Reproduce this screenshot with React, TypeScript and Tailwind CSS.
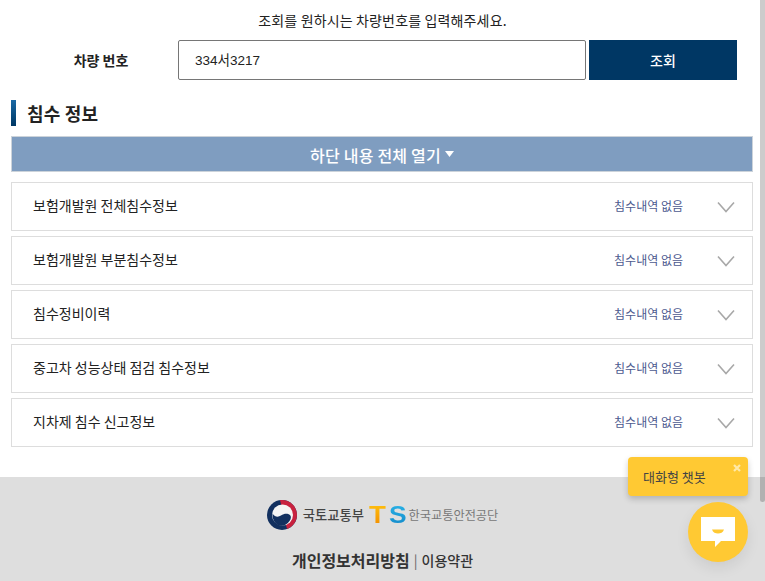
const font = "font-['Noto_Sans_CJK_KR','Noto_Sans',sans-serif]";

const rows = [
  "보험개발원 전체침수정보",
  "보험개발원 부분침수정보",
  "침수정비이력",
  "중고차 성능상태 점검 침수정보",
  "지차제 침수 신고정보",
];

function Chevron() {
  return (
    <svg width="18" height="12" viewBox="0 0 18 12" fill="none" className="shrink-0">
      <path d="M1 1.5 9 10.5 17 1.5" stroke="#a8a8a8" strokeWidth="1.6" />
    </svg>
  );
}

function GovLogo() {
  return (
    <svg width="30" height="30" viewBox="0 0 30 30" className="shrink-0">
      <circle cx="15" cy="15" r="15" fill="#12305f" />
      <path d="M13 .1A15 15 0 0 1 20 29.100z" fill="#c8213e" />
      <circle cx="15.500" cy="15" r="10.500" fill="#f4f4f4" />
      <path d="M5.500 13.500c2.500 3.500 5.500 4 8.500 2s6.500-2.500 9-.5c1.500 1.500 1 4-.5 6-2 3-5 4.800-8 4.800-5 0-9.500-5-9-12.300z" fill="#12305f" />
    </svg>
  );
}

export default function App() {
  return (
    <div className={`${font} relative h-[581px] w-[765px] overflow-hidden bg-white text-[#222]`}>
      <p className="pt-[10px] text-center text-[14px] leading-[20px] tracking-[0.15px]">조회를 원하시는 차량번호를 입력해주세요.</p>

      <div className="mt-[10px] flex h-[40px] items-stretch">
        <label className="flex w-[178px] items-center justify-center pl-[24px] text-[14px] font-bold">차량 번호</label>
        <input
          readOnly
          value="334서3217"
          className="h-[40px] w-[408px] rounded-[2px] border border-[#767676] px-[16px] pb-[2px] font-['Liberation_Sans','Noto_Sans_CJK_KR',sans-serif] text-[13.5px] outline-none"
        />
        <button className="ml-[3px] w-[148px] bg-[#003764] text-[14px] font-medium text-white">조회</button>
      </div>

      <div className="mt-[20px] ml-[11px] flex h-[26px] items-center gap-[11px]">
        <span className="h-[26px] w-[5px] bg-gradient-to-b from-[#1b6aa5] to-[#003764]" />
        <h2 className="text-[18px] font-bold tracking-[0.2px]">침수 정보</h2>
      </div>

      <button className="mt-[10px] ml-[11px] flex h-[36px] w-[742px] items-center justify-center gap-[4px] border border-[#ccd3da] bg-[#7f9dc0] text-[16px] font-medium tracking-[0.2px] text-white">
        <span className="relative top-[1px]">하단 내용 전체 열기</span>
        <svg width="9" height="6" viewBox="0 0 9 6"><path d="M0 0h9L4.500 6z" fill="#fff" /></svg>
      </button>

      <div className="mt-[10px] ml-[11px] flex w-[742px] flex-col gap-[5px]">
        {rows.map((row) => (
          <div key={row} className="flex h-[49px] items-center border border-[#ddd] pr-[17px] pl-[21px]">
            <span className="mb-[3px] flex-1 text-[14px]">{row}</span>
            <span className="mr-[34px] mb-[1px] text-[12px] text-[#4d5a8f]">침수내역 없음</span>
            <Chevron />
          </div>
        ))}
      </div>

      <footer className="mt-[30px] flex h-[104px] flex-col items-center bg-[#dedede] pt-[23px]">
        <div className="flex h-[30px] items-center">
          <GovLogo />
          <span className="ml-[6px] text-[13.3px] font-medium text-[#444]">국토교통부</span>
          <span className="ml-[5px] flex font-['Liberation_Sans',sans-serif] text-[24px] leading-[24px] font-bold">
            <span className="mr-[5px] origin-left scale-x-[1.15] bg-gradient-to-b from-[#ffc20e] to-[#f08a00] bg-clip-text text-transparent">T</span>
            <span className="origin-left scale-x-[1.1] bg-gradient-to-b from-[#2ab4e8] to-[#1288c8] bg-clip-text text-transparent">S</span>
          </span>
          <span className="ml-[4px] text-[12.2px] text-[#777]">한국교통안전공단</span>
        </div>
        <div className="mt-[18px] flex items-center text-[#333]">
          <span className="text-[16px] font-bold">개인정보처리방침</span>
          <span className="mx-[4px] text-[14px] text-[#666]">|</span>
          <span className="text-[14px] font-medium">이용약관</span>
        </div>
        <p className="mt-[5px] text-[13px] leading-[20px] whitespace-nowrap text-[#555]">경상북도 김천시 혁신6로 17</p>
      </footer>

      <div className="absolute top-0 right-0 h-[502px] w-[5px] rounded-b-[3px] bg-black/20" />

      <div className="absolute top-[457px] left-[628px] flex h-[39px] w-[120px] items-center rounded-[4px] bg-[#ffc933] pl-[15px] text-[13px] text-[#444] shadow-[0_3px_6px_rgba(0,0,0,0.2)]">
        대화형 챗봇
        <svg width="8" height="8" viewBox="0 0 8 8" className="absolute top-[7px] right-[7px]">
          <path d="M1 1l6 6M7 1 1 7" stroke="#ffe9a8" strokeWidth="2.200" />
        </svg>
      </div>

      <div className="absolute top-[502px] left-[688px] flex h-[60px] w-[60px] items-center justify-center rounded-full bg-[#ffc933] shadow-[0_6px_14px_rgba(0,0,0,0.08)]">
        <svg width="34" height="30" viewBox="0 0 34 30">
          <path d="M0 0h34v24H20l-6 6v-6H0z" fill="#fff" />
          <path d="M11 12.500h12c-1 3-3.500 4-6 4s-5-1-6-4z" fill="#ffc933" />
        </svg>
      </div>
    </div>
  );
}
